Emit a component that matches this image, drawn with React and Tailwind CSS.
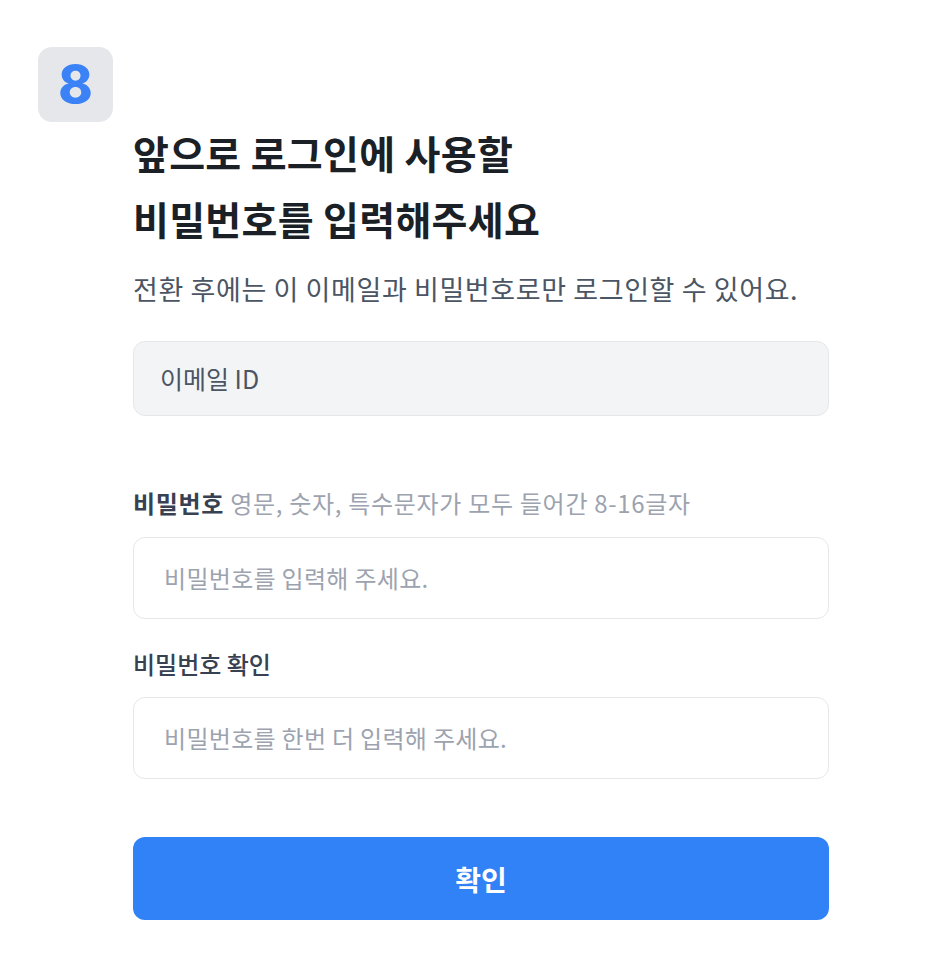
import React from 'react';

const font = { fontFamily: '"Noto Sans CJK KR", "Noto Sans", sans-serif' };

const App = () => {
  return (
    <div className="min-h-screen bg-white" style={font}>
      <div className="pt-[47px] pl-[38px] pr-[99px]">
        {/* step badge */}
        <div className="w-[75px] h-[75px] rounded-[14px] bg-[#e5e7eb] flex items-center justify-center">
          <span className="text-[52px] leading-none font-extrabold text-[#3b82f6] font-['Inter',sans-serif]">8</span>
        </div>

        <div className="ml-[95px]">
          <h1 className="mt-[-3px] text-[39px] leading-[66px] font-bold text-[#1b1f26] tracking-[0.3px]">
            앞으로 로그인에 사용할
            <br />
            비밀번호를 입력해주세요
          </h1>

          <p className="mt-[20px] text-[27px] leading-[36px] text-[#4b5563] tracking-[0.6px]">
            전환 후에는 이 이메일과 비밀번호로만 로그인할 수 있어요.
          </p>

          <div className="mt-[34px] h-[75px] rounded-[12px] bg-[#f3f4f6] border border-[#e5e7eb] flex items-center px-[26px]">
            <span className="text-[25px] text-[#4b5563]">이메일 ID</span>
          </div>

          <div className="mt-[71px] text-[24px] leading-[32px] tracking-[0.7px]">
            <span className="font-bold text-[#374151]">비밀번호</span>
            <span className="text-[#9ca3af]"> 영문, 숫자, 특수문자가 모두 들어간 8-16글자</span>
          </div>
          <div className="mt-[18px] h-[82px] rounded-[12px] bg-white border border-[#e5e7eb] flex items-center px-[30px]">
            <span className="text-[24px] text-[#9ca3af] tracking-[0.3px]">비밀번호를 입력해 주세요.</span>
          </div>

          <div className="mt-[29px] text-[24px] leading-[32px] font-medium text-[#374151]">
            비밀번호 확인
          </div>
          <div className="mt-[17px] h-[82px] rounded-[12px] bg-white border border-[#e5e7eb] flex items-center px-[30px]">
            <span className="text-[24px] text-[#9ca3af] tracking-[0.3px]">비밀번호를 한번 더 입력해 주세요.</span>
          </div>

          <button className="mt-[58px] w-full h-[83px] rounded-[12px] bg-[#3182f6] text-white text-[28px] font-bold">
            확인
          </button>
        </div>
      </div>
    </div>
  );
};

export default App;
